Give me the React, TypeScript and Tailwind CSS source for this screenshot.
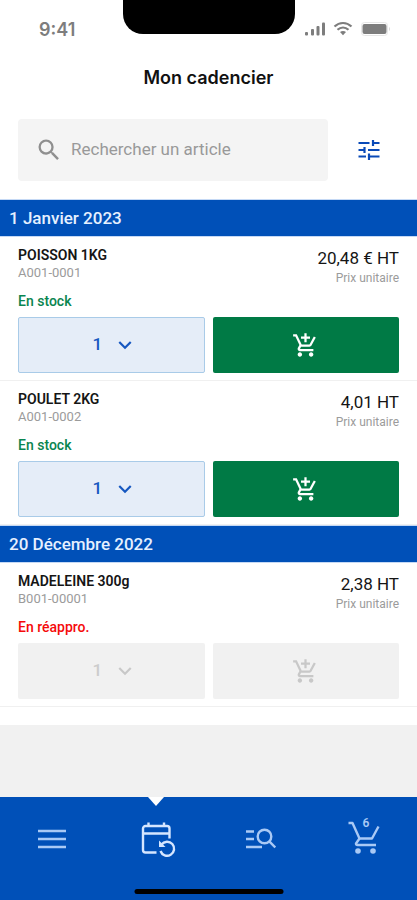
import React, { useState } from 'react';
import { MdAddShoppingCart, MdKeyboardArrowDown, MdSearch } from 'react-icons/md';

type Article = {
	name: string;
	code: string;
	price: string;
	inStock: boolean;
};

const orders: { date: string; articles: Article[] }[] = [
	{
		date: '1 Janvier 2023',
		articles: [
			{ name: 'POISSON 1KG', code: 'A001-0001', price: '20,48 € HT', inStock: true },
			{ name: 'POULET 2KG', code: 'A001-0002', price: '4,01 HT', inStock: true },
		],
	},
	{
		date: '20 Décembre 2022',
		articles: [{ name: 'MADELEINE 300g', code: 'B001-00001', price: '2,38 HT', inStock: false }],
	},
];

function StatusBar() {
	return (
		<div className="relative flex h-[58px] items-center justify-between pl-[39px] pr-[26px] text-[#7d7d7d]">
			<span className="font-['Inter'] text-[18px] font-semibold">9:41</span>
			<div className="absolute left-1/2 top-0 h-[34px] w-[172px] -translate-x-1/2 rounded-b-[20px] bg-black" />
			<svg width="87" height="16" viewBox="0 0 87 16" fill="currentColor">
				<rect x="1" y="11" width="3" height="3.500" rx="1" />
				<rect x="7" y="8" width="3" height="6.500" rx="1" />
				<rect x="12.500" y="5" width="3" height="9.500" rx="1" />
				<rect x="18" y="1.500" width="3" height="13" rx="1" />
				<g fill="none" stroke="currentColor" strokeWidth="2.200">
					<path d="M30.500 5.500C35.500 0.800 42.500 0.800 47.500 5.500" />
					<path d="M33.500 8.800C36.800 5.800 41.200 5.800 44.500 8.800" />
				</g>
				<path d="M36 11c1.800-1.500 4.200-1.500 6 0L39 14.200z" />
				<rect x="57.500" y="1.500" width="26" height="13" rx="3" fill="none" stroke="#e6e6e6" />
				<rect x="58.500" y="3" width="24" height="10" rx="2" />
				<path d="M85 6v4c1.200-.5 1.200-3.500 0-4z" fill="#d4d4d4" />
			</svg>
		</div>
	);
}

function TuneIcon() {
	return (
		<svg width="22" height="22" viewBox="0 0 22 22" fill="none" stroke="currentColor" strokeWidth="2.200">
			<path d="M0.500 4H11.500M15 1V7M15 4H21.500" />
			<path d="M0.500 11H6M6.500 8V14M10 11H21.500" />
			<path d="M0.500 17.500H8M11 14.500V21M11 17.500H21.500" />
		</svg>
	);
}

function ArticleRow({ article }: { article: Article }) {
	const [quantity, setQuantity] = useState('1');
	const { name, code, price, inStock } = article;

	return (
		<li className="flex h-36 flex-col justify-between border-b border-[#f0f0f0] px-[18px] pt-2 pb-[7px]">
			<div className="flex justify-between">
				<div>
					<h3 className="text-[14px] leading-5 font-semibold text-[#151515]">{name}</h3>
					<p className="text-[13px] leading-4 text-[#9b9b9b]">{code}</p>
					<p
						className={
							inStock
								? 'mt-3 text-[14px] leading-4 font-medium text-[#0a8550]'
								: 'mt-3 text-[14px] leading-4 font-medium text-[#f50a0a]'
						}
					>
						{inStock ? 'En stock' : 'En réappro.'}
					</p>
				</div>
				<div className="pt-[3px] text-right">
					<p className="text-[17px] leading-5 text-[#151515]">{price}</p>
					<p className="text-[12px] leading-5 text-[#9b9b9b]">Prix unitaire</p>
				</div>
			</div>

			<div className="grid grid-cols-2 gap-2">
				<div className="relative">
					<select
						aria-label={`Quantité ${name}`}
						value={quantity}
						onChange={(e) => setQuantity(e.target.value)}
						disabled={!inStock}
						className={
							inStock
								? 'h-14 w-full appearance-none rounded-xs border border-[#a9cbe8] bg-[#e5edf8] pr-7 text-center text-[17px] font-medium text-[#1557c0]'
								: 'h-14 w-full appearance-none rounded-xs bg-[#f1f1f1] pr-7 text-center text-[17px] font-medium text-[#cccccc] opacity-100'
						}
					>
						<option>1</option>
						<option>2</option>
						<option>3</option>
					</select>
					<div
						className={
							inStock
								? 'pointer-events-none absolute inset-0 flex items-center justify-center pl-7 text-[#1557c0]'
								: 'pointer-events-none absolute inset-0 flex items-center justify-center pl-7 text-[#c8c8c8]'
						}
					>
						<MdKeyboardArrowDown size={26} />
					</div>
				</div>
				<button
					aria-label={`Ajouter ${name} au panier`}
					disabled={!inStock}
					className={
						inStock
							? 'flex h-14 items-center justify-center rounded-xs bg-[#007a45] text-white'
							: 'flex h-14 items-center justify-center rounded-xs bg-[#f1f1f1] text-[#c8c8c8]'
					}
				>
					<MdAddShoppingCart size={27} />
				</button>
			</div>
		</li>
	);
}

function NavBar() {
	return (
		<nav className="relative grid h-[103px] grid-cols-4 bg-[#0050b8] text-[#a9c9f5]">
			<button aria-label="Menu" className="flex h-[83px] items-center justify-center">
				<svg width="30" height="24" viewBox="0 0 30 24" stroke="currentColor" strokeWidth="2.400">
					<path d="M1 4H29M1 12H29M1 20H29" />
				</svg>
			</button>
			<button
				aria-label="Mon cadencier"
				className="relative flex h-[83px] items-center justify-center text-[#d5e6ff]"
			>
				<svg width="16" height="9" viewBox="0 0 16 9" className="absolute top-0 fill-white">
					<path d="M0 0H16L8 9z" />
				</svg>
				<svg
					width="36"
					height="38"
					viewBox="0 0 36 38"
					fill="none"
					stroke="currentColor"
					strokeWidth="2.400"
					className="ml-1"
				>
					<path d="M16.500 32.500H5.500A2.500 2.500 0 0 1 3 30V8.500A2.500 2.500 0 0 1 5.500 6H27A2.500 2.500 0 0 1 29.500 8.500V18.500" />
					<path d="M3 13.500H29.500M8.500 2.500V6M24 2.500V6" />
					<path d="M21.500 24.500A7 7 0 1 1 20.500 31" />
					<path d="M19 20.500V27H25.500z" fill="currentColor" stroke="none" />
				</svg>
			</button>
			<button aria-label="Recherche" className="flex h-[83px] items-center justify-center">
				<svg width="30" height="22" viewBox="0 0 30 22" fill="none" stroke="currentColor" strokeWidth="2.400">
					<path d="M0 3.500H8M0 11H8M0 19H16" />
					<circle cx="18.500" cy="8.500" r="6.800" />
					<path d="M23.300 13.300L29.300 19.500" />
				</svg>
			</button>
			<button
				aria-label="Panier, 6 articles"
				className="relative flex h-[83px] items-center justify-center pr-0.5"
			>
				<span className="absolute top-5 pl-1 text-[12px] leading-3 font-semibold">6</span>
				<svg
					width="32"
					height="34"
					viewBox="0 0 32 34"
					fill="none"
					stroke="currentColor"
					strokeWidth="2.400"
					strokeLinejoin="round"
					className="mb-1"
				>
					<path d="M0.500 3H4.500L11.500 18.500H24L30.500 6.500" />
					<path d="M11.500 18.500L8 23.500Q8 25 9.500 25H28" />
					<circle cx="10" cy="31" r="2.800" fill="currentColor" stroke="none" />
					<circle cx="25" cy="31" r="2.800" fill="currentColor" stroke="none" />
				</svg>
			</button>
			<div className="absolute bottom-1.5 left-1/2 h-[5px] w-[149px] -translate-x-1/2 rounded-full bg-black" />
		</nav>
	);
}

function App() {
	const [search, setSearch] = useState('');

	return (
		<div className="flex min-h-screen flex-col bg-[#f1f1f1] font-['Roboto',sans-serif]">
			<main className="bg-white pb-[18px]">
				<StatusBar />
				<h1 className="h-[61px] pt-2 text-center font-['Inter'] text-[18px] leading-6 font-semibold text-[#111]">
					Mon cadencier
				</h1>

				<div className="flex items-center pl-[18px] pb-[18px]">
					<label className="flex h-[62px] flex-1 items-center gap-2 rounded-sm bg-[#f4f4f4] pl-[17px] text-[#8f8f8f]">
						<MdSearch size={28} className="shrink-0" />
						<input
							type="text"
							aria-label="Rechercher un article"
							placeholder="Rechercher un article"
							value={search}
							onChange={(e) => setSearch(e.target.value)}
							className="w-full min-w-0 bg-transparent text-[17px] outline-none placeholder:text-[#999999]"
						/>
					</label>
					<button aria-label="Filtrer" className="flex w-[89px] justify-center pr-2 text-[#0a4ab8]">
						<TuneIcon />
					</button>
				</div>

				{orders.map((order) => (
					<section key={order.date}>
						<h2 className="border-y border-[#c5d9f5] bg-[#0050b8] pl-[9px] text-[17px] leading-9 font-medium text-[#e6f0ff]">
							{order.date}
						</h2>
						<ul>
							{order.articles.map((article) => (
								<ArticleRow key={article.code} article={article} />
							))}
						</ul>
					</section>
				))}
			</main>

			<div className="mt-auto">
				<NavBar />
			</div>
		</div>
	);
}

export default App;
